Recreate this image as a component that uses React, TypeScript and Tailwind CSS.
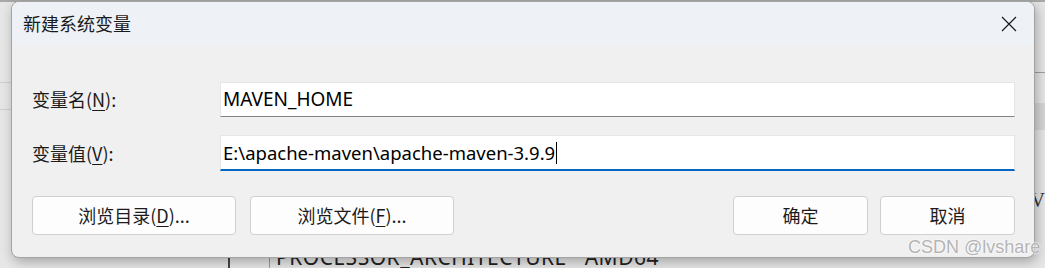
import React from 'react';

const cjk = { fontFamily: '"Noto Sans CJK SC", "Noto Sans", sans-serif' };

function Mn({ children }: { children: React.ReactNode }) {
  return <span className="underline underline-offset-[3px] decoration-1">{children}</span>;
}

function Btn({ children, w }: { children: React.ReactNode; w: string }) {
  return (
    <button
      className={`${w} h-[39px] rounded-[4px] border border-[#d0d0d0] bg-[#fdfdfd] text-[18px] text-[#1b1b1b] flex items-center justify-center`}
      style={cjk}
    >
      {children}
    </button>
  );
}

export default function App() {
  return (
    <div className="relative w-[1045px] h-[268px] overflow-hidden bg-[#e6e6e6]" style={cjk}>
      {/* window behind the dialog */}
      <div className="absolute left-0 top-0 w-full h-[2px] bg-[#a8a8a8]" />
      <div className="absolute left-0 top-[82px] w-[12px] h-px bg-[#cfcfcf]" />
      <div className="absolute left-0 top-[109px] w-[12px] h-px bg-[#cfcfcf]" />
      <div className="absolute right-0 top-[72px] w-[12px] h-px bg-[#a0a0a0]" />
      <div className="absolute right-0 top-[103px] w-[10px] h-[27px] bg-[#d6d6d6]" />
      <div className="absolute right-0 top-[190px] text-[20px] text-[#333] leading-none" style={{ fontFamily: '"Liberation Serif", serif' }}>
        V
      </div>
      <div className="absolute left-[228px] top-[246px] w-[2px] h-[22px] bg-[#444]" />
      <div className="absolute left-[269px] top-[246px] w-px h-[22px] bg-[#9a9a9a]" />
      <div
        className="absolute left-[276px] top-[247px] text-[21px] leading-none text-[#222] tracking-[0.5px]"
        style={{ fontFamily: '"Noto Sans", sans-serif' }}
      >
        PROCESSOR_ARCHITECTURE&nbsp;&nbsp;&nbsp;AMD64
      </div>

      {/* dialog */}
      <div className="absolute left-[11px] top-[1px] w-[1024px] h-[257px] rounded-[8px] border border-[#a3a3a3] bg-[#f0f0f0] overflow-hidden shadow-[2px_4px_12px_rgba(0,0,0,0.28)] flex flex-col">
        <div className="h-[43px] bg-[#eef2f7] flex items-center justify-between pl-[11px] pr-[16px] shrink-0">
          <span className="text-[18px] text-[#1a1a1a]">新建系统变量</span>
          <svg width="16" height="16" viewBox="0 0 16 16" className="mr-[1px]">
            <path d="M1 1 L15 15 M15 1 L1 15" stroke="#1a1a1a" strokeWidth="1.2" fill="none" />
          </svg>
        </div>

        <div className="flex flex-col pt-[37px] pl-[20px] pr-[19px]">
          <div className="flex items-center h-[35px]">
            <div className="w-[188px] text-[18px] text-[#1a1a1a]">
              变量名(<Mn>N</Mn>):
            </div>
            <div
              className="flex-1 h-[35px] bg-white border border-[#e6e6e6] border-b-[#848484] flex items-center pl-[2px] text-[19px] text-black"
              style={{ fontFamily: '"Noto Sans", sans-serif' }}
            >
              MAVEN_HOME
            </div>
          </div>

          <div className="flex items-center h-[36px] mt-[18px]">
            <div className="w-[188px] text-[18px] text-[#1a1a1a]">
              变量值(<Mn>V</Mn>):
            </div>
            <div
              className="flex-1 h-[36px] bg-white border border-[#e6e6e6] border-b-2 border-b-[#0067c0] flex items-center pl-[2px] text-[18.5px] text-black"
              style={{ fontFamily: '"Noto Sans", sans-serif' }}
            >
              E:\apache-maven\apache-maven-3.9.9
              <span className="inline-block w-px h-[22px] bg-black ml-px" />
            </div>
          </div>

          <div className="flex items-center mt-[25px]">
            <Btn w="w-[204px]">
              浏览目录(<Mn>D</Mn>)...
            </Btn>
            <div className="w-[14px]" />
            <Btn w="w-[204px]">
              浏览文件(<Mn>F</Mn>)...
            </Btn>
            <div className="flex-1" />
            <Btn w="w-[135px]">确定</Btn>
            <div className="w-[12px]" />
            <Btn w="w-[135px]">取消</Btn>
          </div>
        </div>
      </div>

      {/* watermark */}
      <div
        className="absolute left-[908px] top-[238px] text-[18px] leading-none text-[#b4b4b4] [text-shadow:0_0_2px_#fff,0_0_2px_#fff]"
        style={{ fontFamily: '"Liberation Sans", sans-serif' }}
      >
        CSDN @lvshare
      </div>
    </div>
  );
}
